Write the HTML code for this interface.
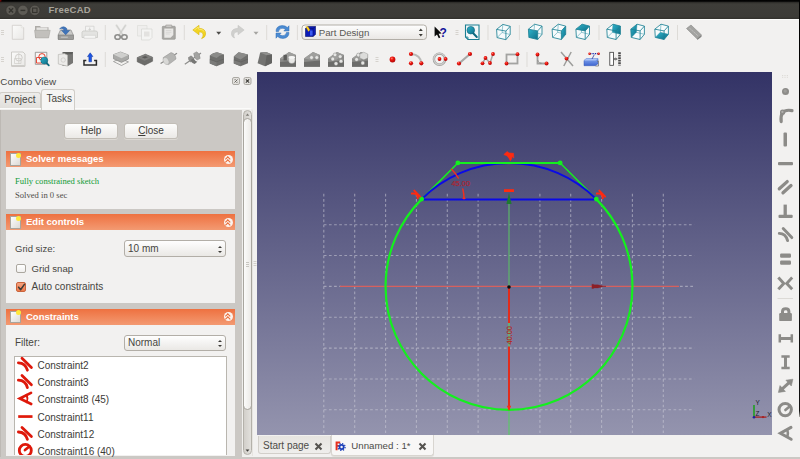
<!DOCTYPE html>
<html><head><meta charset="utf-8"><title>FreeCAD</title>
<style>
html,body{margin:0;padding:0;}
body{width:800px;height:459px;overflow:hidden;background:#f2f1f0;position:relative;font-family:"Liberation Sans","DejaVu Sans",sans-serif;font-size:10px;color:#464541;}
.abs{position:absolute;}
#title{left:0;top:0;width:800px;height:18.5px;background:linear-gradient(#000 0,#050505 1.3px,#2b2a27 2.2px,#3e3d39 4px,#3c3b37 16.5px,#34332f 18.5px);border-bottom:1.5px solid #fcfcfb;}
#title .btn{position:absolute;top:5px;width:10px;height:10px;border-radius:50%;background:#5d5b55;box-shadow:0 0 0 0.5px #33322f;}
#title .t{position:absolute;left:48.5px;top:4px;font-weight:bold;font-size:9.5px;color:#a8a49b;letter-spacing:0.25px;}
.tx{position:absolute;white-space:nowrap;line-height:1;}
.hdr{position:absolute;left:6px;width:229px;height:16px;background:linear-gradient(#ee7140,#f39a72);}
.hdr .ht{position:absolute;left:20px;top:3px;color:#fff;font-weight:bold;font-size:9.5px;line-height:1;white-space:nowrap;}
.body{position:absolute;left:6px;width:229px;background:#f2f1f0;}
.qbtn{position:absolute;height:14px;border:1px solid #c2beb7;border-radius:3px;background:linear-gradient(#fdfdfc,#ebe9e6);box-shadow:0 1px 0 #dcd9d4;text-align:center;line-height:14px;font-size:10px;color:#3c3b37;}

.hdr .ico{position:absolute;left:4px;top:2px;width:10.5px;height:12.5px;background:linear-gradient(135deg,#fdfdfd,#dcdad6);border:0.5px solid #a8a49c;box-sizing:border-box;}
.hdr .ico:after{content:"";position:absolute;right:-1.5px;top:-1.5px;width:5px;height:5px;border-radius:50%;background:#ffe83a;}
.hdr .chev{position:absolute;left:217.5px;top:3.5px;width:9px;height:9px;border-radius:50%;background:#fbf3ee;}
.hdr .chev:before{content:"";position:absolute;left:2.6px;top:2.4px;width:2.6px;height:2.6px;border-left:1.1px solid #e86a36;border-top:1.1px solid #e86a36;transform:rotate(45deg);}
.hdr .chev:after{content:"";position:absolute;left:2.6px;top:5px;width:2.6px;height:2.6px;border-left:1.1px solid #e86a36;border-top:1.1px solid #e86a36;transform:rotate(45deg);}
.combo{position:absolute;width:102px;height:16.5px;box-sizing:border-box;border:1px solid #b2aea7;border-radius:3px;background:linear-gradient(#fefefe,#eae8e5);}
.combo span{position:absolute;left:3.5px;top:2.5px;font-size:10px;line-height:1;white-space:nowrap;}
.combo i{position:absolute;left:93.5px;width:0;height:0;border-left:2px solid transparent;border-right:2px solid transparent;}
.combo i.up{top:4.5px;border-bottom:2.5px solid #3c3b37;}
.combo i.dn{top:9.5px;border-top:2.5px solid #3c3b37;}
.cb{position:absolute;width:9.7px;height:9.5px;box-sizing:border-box;border:1px solid #aba79f;border-radius:2px;background:linear-gradient(#fff,#f1f0ee);}
.cb.on{border-color:#c9643c;background:linear-gradient(#f6a27e,#ee7b4c);}
.li{position:absolute;left:37.5px;font-size:10px;line-height:1;white-space:nowrap;color:#3c3b37;}
</style></head><body>
<div id="title" class="abs">
  <svg class="abs" style="left:0;top:0" width="48" height="19" viewBox="0 0 48 19">
    <g fill="#5d5b55" stroke="#32312d" stroke-width="0.5"><circle cx="11" cy="10.3" r="5.1"/><circle cx="22.9" cy="10.3" r="5.1"/><circle cx="34.8" cy="10.3" r="5.1"/></g>
    <path d="M8.9 8.2 L13.1 12.4 M13.1 8.2 L8.9 12.4" stroke="#35342f" stroke-width="1.4"/><rect x="0" y="0" width="1.4" height="1.6" fill="#6a0808"/>
    <path d="M20.5 10.4 H25.3" stroke="#35342f" stroke-width="1.4"/>
    <rect x="32.6" y="8.1" width="4.4" height="4.4" fill="none" stroke="#35342f" stroke-width="1.1"/>
  </svg>
  <div class="t">FreeCAD</div>
</div>
<div class="abs" style="left:799px;top:0;width:1px;height:417px;background:linear-gradient(#000,#111 98.5%,#b0aeaa);z-index:5;"></div>

<svg id="tbsvg" class="abs" style="left:0;top:19px" width="800" height="53" viewBox="0 19 800 53">
<defs>
<linearGradient id="gpaper" x1="0" y1="0" x2="1" y2="1"><stop offset="0" stop-color="#fbfbfa"/><stop offset="1" stop-color="#e9e8e6"/></linearGradient>
<linearGradient id="gteal" x1="0" y1="0" x2="1" y2="1"><stop offset="0" stop-color="#2fb4cc"/><stop offset="1" stop-color="#0d6f88"/></linearGradient>
<radialGradient id="gred" cx="0.38" cy="0.32" r="0.7"><stop offset="0" stop-color="#ff8a7a"/><stop offset="0.35" stop-color="#f01810"/><stop offset="1" stop-color="#b00808"/></radialGradient>
<linearGradient id="ggray" x1="0" y1="0" x2="0" y2="1"><stop offset="0" stop-color="#9a9a98"/><stop offset="1" stop-color="#6e6e6c"/></linearGradient>
<linearGradient id="gblue" x1="0" y1="0" x2="0" y2="1"><stop offset="0" stop-color="#86a8f0"/><stop offset="1" stop-color="#3f66d0"/></linearGradient>
</defs>
<path d="M1 30.5 h3 M1 32.5 h3 M1 34.5 h3" stroke="#d2cfca" stroke-width="0.9"/>
<path d="M1 57.5 h3 M1 59.5 h3 M1 61.5 h3" stroke="#d2cfca" stroke-width="0.9"/>
<path d="M455.5 30.5 h3 M455.5 32.5 h3 M455.5 34.5 h3" stroke="#d2cfca" stroke-width="0.9"/>
<path d="M375.5 57.5 h3 M375.5 59.5 h3 M375.5 61.5 h3" stroke="#d2cfca" stroke-width="0.9"/>
<line x1="105.3" y1="25" x2="105.3" y2="40" stroke="#dddbd7" stroke-width="1"/>
<line x1="184.3" y1="25" x2="184.3" y2="40" stroke="#dddbd7" stroke-width="1"/>
<line x1="266.7" y1="25" x2="266.7" y2="40" stroke="#dddbd7" stroke-width="1"/>
<line x1="297.4" y1="25" x2="297.4" y2="40" stroke="#dddbd7" stroke-width="1"/>
<line x1="488" y1="25" x2="488" y2="40" stroke="#dddbd7" stroke-width="1"/>
<line x1="519.4" y1="25" x2="519.4" y2="40" stroke="#dddbd7" stroke-width="1"/>
<line x1="599" y1="25" x2="599" y2="40" stroke="#dddbd7" stroke-width="1"/>
<line x1="677.5" y1="25" x2="677.5" y2="40" stroke="#dddbd7" stroke-width="1"/>
<line x1="105.3" y1="52" x2="105.3" y2="67" stroke="#dddbd7" stroke-width="1"/>
<line x1="527" y1="52" x2="527" y2="67" stroke="#dddbd7" stroke-width="1"/>
<path d="M12.3 25.3 h9 l2.4 2.4 v11.6 h-11.4 z" fill="url(#gpaper)" stroke="#cfcdc9" stroke-width="0.8"/><path d="M21.3 25.3 v2.4 h2.4" fill="#fff" stroke="#d8d6d2" stroke-width="0.6"/>
<path d="M35 26 h5 l1 1.2 h7.5 v10.5 h-13.5 z" fill="#adaba7"/><path d="M36.5 27.5 h11 v3 h-11z" fill="#e4e3e1"/><path d="M34.6 30.3 h15.6 l-1.6 7.6 h-13 z" fill="#c2c0bc" stroke="#a9a7a3" stroke-width="0.6"/>
<path d="M60.5 30 h10.5 l2.3 5 v4.3 h-15.2 v-4.3 z" fill="#c9c9c7" stroke="#8e8e8c" stroke-width="0.7"/><rect x="58.3" y="35" width="15" height="4.3" fill="#9c9c9a" stroke="#7e7e7c" stroke-width="0.6"/><path d="M60.8 37.2 h7" stroke="#d8d8d6" stroke-width="0.8"/>
<path d="M59.6 28.8 Q63.5 24.8 66.8 28.6 L66.8 30.4 L69.6 30.4 L65.7 34.8 L61.6 30.4 L64.4 30.4 Q63.5 27.6 59.6 28.8 Z" fill="#3f74ba" stroke="#2b5a9c" stroke-width="0.5"/>
<path d="M85.5 26.2 h8.5 v5.5 h-8.5z" fill="#f3f3f2" stroke="#cfcfcd" stroke-width="0.7"/><path d="M83 31 h13.5 l1 1.2 v5.3 h-15.5 v-5.3 z" fill="#e3e3e1" stroke="#c4c4c2" stroke-width="0.7"/><path d="M84 35.3 h11.6 v3 h-11.6z" fill="#f5f5f4" stroke="#cfcfcd" stroke-width="0.6"/><path d="M89.7 27.5 v2.6 M88.5 29 l1.2 1.3 l1.2 -1.3" stroke="#c9c9c7" stroke-width="0.8" fill="none"/>
<path d="M116.5 25.3 L123.2 35.5 M125.5 25.3 L118.8 35.5" stroke="#dededc" stroke-width="2.2" stroke-linecap="round"/><path d="M116.5 25.3 L123.2 35.5 M125.5 25.3 L118.8 35.5" stroke="#c2c2c0" stroke-width="0.6"/><ellipse cx="117.6" cy="37" rx="2.7" ry="2.3" fill="none" stroke="#8e8e8c" stroke-width="1.6"/><ellipse cx="124.4" cy="37" rx="2.7" ry="2.3" fill="none" stroke="#8e8e8c" stroke-width="1.6"/>
<path d="M137.5 25.5 h9.5 v10.5 h-9.5z" fill="#efeeed" stroke="#dddcda" stroke-width="0.7"/><path d="M141.5 29 h10.5 v8.5 l-2.5 2.5 h-8z" fill="#f4f4f3" stroke="#d6d5d3" stroke-width="0.7"/><rect x="144" y="31.5" width="5.5" height="5" fill="#e3e2e0"/>
<rect x="162.3" y="26.3" width="13" height="13" rx="0.8" fill="#a9a8a5" stroke="#8f8e8b" stroke-width="0.6"/><path d="M164.3 28.5 h9 v6.5 l-2.8 2.8 h-6.2z" fill="#e9e8e6"/><path d="M165.8 25 h6 v2.6 h-6z" fill="#c9c8c5" stroke="#9a9996" stroke-width="0.6"/><path d="M165.8 30.5 h5.5 M165.8 32.3 h5.5 M165.8 34 h4" stroke="#d2d1cf" stroke-width="0.7"/>
<path d="M192.8 30 L199 25.3 L199 28.3 Q205.8 28.6 205.6 34 Q205.4 37.6 201.6 38.6 Q203.6 36.4 203 34 Q202.4 31.8 199 31.8 L199 34.8 Z" fill="#f2d422" stroke="#d9b70e" stroke-width="0.6" stroke-linejoin="round"/><path d="M194.3 30 L198.3 27 L198.3 29 Q203 29.2 204.4 31.6" fill="none" stroke="#fbec7a" stroke-width="0.8"/>
<path d="M216.2 31.8 h5 l-2.5 3 z" fill="#4c4b48"/>
<path d="M244.2 30 L238 25.3 L238 28.3 Q231.2 28.6 231.4 34 Q231.6 37.2 234.6 38 Q233.4 36.2 234 34 Q234.6 31.8 238 31.8 L238 34.8 Z" fill="#cfcfcd" stroke="#c2c2c0" stroke-width="0.5" stroke-linejoin="round"/>
<path d="M253.5 31.8 h5 l-2.5 3 z" fill="#a5a4a1"/>
<g fill="#4b8bd2" stroke="#2f6cb4" stroke-width="0.5" stroke-linejoin="round"><path d="M276 31.5 Q276 26 282 25.6 Q285.5 25.5 287.4 27.5 L289 25.8 L289 31 L283.8 31 L285.4 29.4 Q284 28.2 282 28.3 Q278.8 28.6 278.6 31.5 Z"/><path d="M289 32.5 Q289 38 283 38.4 Q279.5 38.5 277.6 36.5 L276 38.2 L276 33 L281.2 33 L279.6 34.6 Q281 35.8 283 35.7 Q286.2 35.4 286.4 32.5 Z"/></g>
<defs><linearGradient id="gcombo" x1="0" y1="0" x2="0" y2="1"><stop offset="0" stop-color="#fefefe"/><stop offset="1" stop-color="#e9e7e4"/></linearGradient></defs>
<rect x="302" y="25" width="124.5" height="14.5" rx="3" fill="url(#gcombo)" stroke="#b2aea7" stroke-width="1"/>
<path d="M305.5 28.5 l2.5 -2 h7.5 v8 l-2.5 2 h-7.5z" fill="#0a1ab8" stroke="#06106a" stroke-width="0.6"/><path d="M305.5 28.5 h7.5 l2.5 -2 M313 28.5 v8" fill="none" stroke="#06106a" stroke-width="0.6"/><path d="M305.7 26.8 l2.3 -0.2 l2 3.4 l-1.6 1.6 z" fill="#ffd21a" stroke="#b08a00" stroke-width="0.3"/><rect x="310" y="30.5" width="2.6" height="5" fill="#3a5af0"/>
<text x="318.7" y="36" font-family="Liberation Sans,sans-serif" font-size="9.7" fill="#5a5854">Part Design</text>
<path d="M418.8 31 l2 -2.5 l2 2.5z M418.8 34 l2 2.5 l2 -2.5z" fill="#3c3b37"/>
<path d="M434.6 26.6 L434.6 36.4 L437 34.4 L438.8 38.2 L440.3 37.5 L438.6 33.8 L441.6 33.6 Z" fill="#0a0a0a"/><text x="439.6" y="37" font-family="Liberation Sans,sans-serif" font-weight="bold" font-size="12" fill="#14149a">?</text>
<path d="M465.5 25 h13.5 v14.5 h-11 l-2.5 -2.5 z" fill="#f4f8f9" stroke="#1b7f92" stroke-width="1.1"/><path d="M465.5 37 h2.5 v2.5" fill="none" stroke="#1b7f92" stroke-width="0.8"/><line x1="472.5" y1="32.5" x2="476.8" y2="37" stroke="#0f6b80" stroke-width="2" stroke-linecap="round"/><circle cx="470.8" cy="30.2" r="3.8" fill="url(#gteal)" stroke="#0c6278" stroke-width="0.6"/>
<path d="M496.6 29.4 L502.8 24.4 L510.2 26.3 L510.2 34.5 L505.9 39.7 L497.1 37.6 Z" fill="#f7fbfc"/><path d="M502.8 24.4 L502.1 32.5 M502.1 32.5 L497.1 37.6 M502.1 32.5 L510.2 34.5" fill="none" stroke="#2a8fa2" stroke-width="0.6" opacity="0.8"/><path d="M496.6 29.4 L502.8 24.4 L510.2 26.3 L510.2 34.5 L505.9 39.7 L497.1 37.6 Z M496.6 29.4 L505.9 31.1 M505.9 31.1 L510.2 26.3 M505.9 31.1 L505.9 39.7" fill="none" stroke="#1f8295" stroke-width="0.85" stroke-linejoin="round"/>
<path d="M528.4 29.2 L534.6 24.2 L542.0 26.1 L542.0 34.3 L537.7 39.5 L528.9 37.4 Z" fill="#f7fbfc"/><path d="M528.4 29.2 L537.7 30.9 L537.7 39.5 L528.9 37.4 Z" fill="url(#gteal)"/><path d="M534.6 24.2 L533.9 32.3 M533.9 32.3 L528.9 37.4 M533.9 32.3 L542.0 34.3" fill="none" stroke="#2a8fa2" stroke-width="0.6" opacity="0.8"/><path d="M528.4 29.2 L534.6 24.2 L542.0 26.1 L542.0 34.3 L537.7 39.5 L528.9 37.4 Z M528.4 29.2 L537.7 30.9 M537.7 30.9 L542.0 26.1 M537.7 30.9 L537.7 39.5" fill="none" stroke="#1f8295" stroke-width="0.85" stroke-linejoin="round"/>
<path d="M552.1 29.2 L558.3 24.2 L565.7 26.1 L565.7 34.3 L561.4 39.5 L552.6 37.4 Z" fill="#f7fbfc"/><path d="M561.4 30.9 L565.7 26.1 L565.7 34.3 L561.4 39.5 Z" fill="url(#gteal)"/><path d="M558.3 24.2 L557.6 32.3 M557.6 32.3 L552.6 37.4 M557.6 32.3 L565.7 34.3" fill="none" stroke="#2a8fa2" stroke-width="0.6" opacity="0.8"/><path d="M552.1 29.2 L558.3 24.2 L565.7 26.1 L565.7 34.3 L561.4 39.5 L552.6 37.4 Z M552.1 29.2 L561.4 30.9 M561.4 30.9 L565.7 26.1 M561.4 30.9 L561.4 39.5" fill="none" stroke="#1f8295" stroke-width="0.85" stroke-linejoin="round"/>
<path d="M575.9 29.2 L582.1 24.2 L589.5 26.1 L589.5 34.3 L585.2 39.5 L576.4 37.4 Z" fill="#f7fbfc"/><path d="M575.9 29.2 L582.1 24.2 L589.5 26.1 L585.2 30.9 Z" fill="url(#gteal)"/><path d="M582.1 24.2 L581.4 32.3 M581.4 32.3 L576.4 37.4 M581.4 32.3 L589.5 34.3" fill="none" stroke="#2a8fa2" stroke-width="0.6" opacity="0.8"/><path d="M575.9 29.2 L582.1 24.2 L589.5 26.1 L589.5 34.3 L585.2 39.5 L576.4 37.4 Z M575.9 29.2 L585.2 30.9 M585.2 30.9 L589.5 26.1 M585.2 30.9 L585.2 39.5" fill="none" stroke="#1f8295" stroke-width="0.85" stroke-linejoin="round"/>
<path d="M606.8 29.2 L613.0 24.2 L620.4 26.1 L620.4 34.3 L616.1 39.5 L607.3 37.4 Z" fill="#f7fbfc"/><path d="M613.0 24.2 L620.4 26.1 L620.4 34.3 L612.3 32.3 Z" fill="url(#gteal)"/><path d="M613.0 24.2 L612.3 32.3 M612.3 32.3 L607.3 37.4 M612.3 32.3 L620.4 34.3" fill="none" stroke="#2a8fa2" stroke-width="0.6" opacity="0.8"/><path d="M606.8 29.2 L613.0 24.2 L620.4 26.1 L620.4 34.3 L616.1 39.5 L607.3 37.4 Z M606.8 29.2 L616.1 30.9 M616.1 30.9 L620.4 26.1 M616.1 30.9 L616.1 39.5" fill="none" stroke="#1f8295" stroke-width="0.85" stroke-linejoin="round"/>
<path d="M630.8 29.2 L637.0 24.2 L644.4 26.1 L644.4 34.3 L640.1 39.5 L631.3 37.4 Z" fill="#f7fbfc"/><path d="M630.8 29.2 L637.0 24.2 L636.3 32.3 L631.3 37.4 Z" fill="url(#gteal)"/><path d="M637.0 24.2 L636.3 32.3 M636.3 32.3 L631.3 37.4 M636.3 32.3 L644.4 34.3" fill="none" stroke="#2a8fa2" stroke-width="0.6" opacity="0.8"/><path d="M630.8 29.2 L637.0 24.2 L644.4 26.1 L644.4 34.3 L640.1 39.5 L631.3 37.4 Z M630.8 29.2 L640.1 30.9 M640.1 30.9 L644.4 26.1 M640.1 30.9 L640.1 39.5" fill="none" stroke="#1f8295" stroke-width="0.85" stroke-linejoin="round"/>
<path d="M654.8 29.2 L661.0 24.2 L668.4 26.1 L668.4 34.3 L664.1 39.5 L655.3 37.4 Z" fill="#f7fbfc"/><path d="M655.3 37.4 L664.1 39.5 L668.4 34.3 L660.3 32.3 Z" fill="url(#gteal)"/><path d="M661.0 24.2 L660.3 32.3 M660.3 32.3 L655.3 37.4 M660.3 32.3 L668.4 34.3" fill="none" stroke="#2a8fa2" stroke-width="0.6" opacity="0.8"/><path d="M654.8 29.2 L661.0 24.2 L668.4 26.1 L668.4 34.3 L664.1 39.5 L655.3 37.4 Z M654.8 29.2 L664.1 30.9 M664.1 30.9 L668.4 26.1 M664.1 30.9 L664.1 39.5" fill="none" stroke="#1f8295" stroke-width="0.85" stroke-linejoin="round"/>
<path d="M686.5 28.5 L691 25 L701.5 35 L697 38.8 Z" fill="#a3a3a1" stroke="#8a8a88" stroke-width="0.6"/><path d="M697 38.8 L701.5 35 L701.5 36.8 L697.3 40 Z" fill="#7f7f7d"/><path d="M689.5 28 l1.6 1.7 M691.7 30 l1.6 1.7 M693.9 32 l1.6 1.7 M696.1 34 l1.6 1.7" stroke="#c9c9c7" stroke-width="0.7"/>
<path d="M11.5 52 h11.5 l2 2 v12.3 h-13.5 z" fill="url(#gpaper)" stroke="#c3c1bd" stroke-width="0.8"/><path d="M12 65.2 h12.5 v1.4 h-12.5z" fill="#c9c7c3"/><circle cx="18.8" cy="57.6" r="3.4" fill="none" stroke="#c6c4c0" stroke-width="0.8"/><path d="M14.5 58.5 h6.5 v5 h-6.5z M18.8 53 v11" fill="none" stroke="#cfcdc9" stroke-width="0.7"/>
<path d="M35.3 52.3 h11.5 v12 h-11.5z" fill="#f8f6f5" stroke="#8a8885" stroke-width="0.8"/><circle cx="42" cy="56.8" r="3.2" fill="none" stroke="#e83a28" stroke-width="1"/><path d="M36.5 57.5 h5 v5.5 h-5z" fill="none" stroke="#e83a28" stroke-width="0.9"/><line x1="46" y1="62.3" x2="48.8" y2="65.3" stroke="#0f6b80" stroke-width="1.8" stroke-linecap="round"/><circle cx="44.3" cy="60.5" r="3.5" fill="url(#gteal)" stroke="#0c6278" stroke-width="0.5"/>
<path d="M62.5 52 h10.5 v11 l-5 3 h-5.5z" fill="#767674"/><path d="M62.5 52 h10.5 l-1 2.2 h-6z" fill="#5e5e5c"/><path d="M58.3 54.5 l6.2 -0.8 l3 1.5 v11 l-9.2 -2.2z" fill="#ecebe9" stroke="#b9b7b3" stroke-width="0.7"/><circle cx="63.2" cy="60" r="2.2" fill="none" stroke="#c9c7c3" stroke-width="0.7"/>
<path d="M84 60.4 v4.6 h12.4 v-4.6" fill="none" stroke="#2b2b2b" stroke-width="1.5" stroke-linejoin="miter"/><path d="M83.3 60.4 h3 M94.1 60.4 h3" stroke="#2b2b2b" stroke-width="1.5"/><path d="M90.2 52.8 L92.9 56.6 L91.5 56.6 L91.5 61.8 L88.9 61.8 L88.9 56.6 L87.5 56.6 Z" fill="#1b55e6" stroke="#0a2f9a" stroke-width="0.5"/>
<path d="M113.5 61.5 l7 -2.8 l8 3.2 l-7 3.6z" fill="#f1f0ee" stroke="#8b8b89" stroke-width="0.7"/><path d="M113.5 54.6 l7 -2.6 l8 3 v4 l-7 3.4 l-8 -3.6z" fill="#a9a9a7" stroke="#80807e" stroke-width="0.6"/><path d="M113.5 54.6 l7 -2.6 l8 3 l-7 3.2z" fill="#cfcfcd"/>
<path d="M137.2 57.6 l8.2 -3.4 l7.2 3 v4 l-8 4 l-7.4 -3.4z" fill="#6c6c6a" stroke="#555553" stroke-width="0.5"/><path d="M137.2 57.6 l8.2 -3.4 l7.2 3 l-8 3.6z" fill="#7f7f7d"/><path d="M141.8 57.3 l3.4 -1.3 l2.8 1.2 l-3.2 1.4z" fill="#5a5a58"/>
<line x1="160.6" y1="63.6" x2="177" y2="53.2" stroke="#8c8c8a" stroke-width="1.2"/><path d="M163.2 57.6 L171 52.6 Q175.6 53.6 176 59 L168.6 64.6 Q163.4 63.8 163.2 57.6Z" fill="#b4b4b2" stroke="#8f8f8d" stroke-width="0.5"/><ellipse cx="166" cy="61" rx="2.6" ry="3.7" transform="rotate(-28 166 61)" fill="#d8d8d6" stroke="#a5a5a3" stroke-width="0.4"/>
<line x1="184.8" y1="64.3" x2="201" y2="53" stroke="#8c8c8a" stroke-width="1.2"/><path d="M188 57.5 l3 -2 q2.6 1 3 5 l-3 2 q-2.6 -1 -3 -5z" fill="#8e8e8c"/><path d="M193.6 53.4 l3 -1.6 q3.4 1.6 3.6 6.6 l-3 1.6 q-3 -1.4 -3.6 -6.6z" fill="#a3a3a1" stroke="#80807e" stroke-width="0.4"/><path d="M190.5 60 l3 -1.6 q1.6 2.4 3.8 3.4 l-2.6 2.2 q-3 -1 -4.2 -4z" fill="#777775"/>
<path d="M209.8 55.5 Q213 52.4 217 52.2 L224 54.6 V63.2 L216.6 66.2 L209.8 63.4Z" fill="#6f6f6d"/><path d="M209.8 55.5 Q213 52.4 217 52.2 L224 54.6 Q219.6 55 216.6 58Z" fill="#8b8b89"/><path d="M209.8 59.6 l6.8 2.4 v4.2 l-6.8 -2.8z" fill="#7b7b79"/><path d="M209.8 59.4 l6.8 2.4 l7.4 -2.9" fill="none" stroke="#5b5b59" stroke-width="0.5"/>
<path d="M233.8 56.5 L238.6 52.2 L248 54.6 V63.2 L240.6 66.2 L233.8 63.4Z" fill="#6f6f6d"/><path d="M233.8 56.5 L238.6 52.2 L248 54.6 L240.6 59.4Z" fill="#8b8b89"/><path d="M233.8 60 l6.8 2.2 v4 l-6.8 -2.8z" fill="#7b7b79"/><path d="M233.8 59.8 l6.8 2.2 l7.4 -2.9" fill="none" stroke="#5b5b59" stroke-width="0.5"/>
<path d="M260.2 52.6 L266.2 52 L272 54.4 V63 L265 66.2 L257.6 63.2Z" fill="#737371"/><path d="M260.2 52.6 L266.2 52 L272 54.4 L266.6 55.2Z" fill="#8f8f8d"/><path d="M266.6 55.2 L272 54.4 V63 L265 66.2Z" fill="#626260"/>
<path d="M280 58.5 L289 52 L296 55 V66.8 H280Z" fill="#8a8a88"/><path d="M280 62 L296 60.5 V66.8 H280Z" fill="#6c6c6a"/><path d="M280 58.5 L289 52 L296 55 L288 60Z" fill="#9f9f9d"/><path d="M283.5 54.8 h3.4 v5.6 h-3.4z" fill="#5d5d5b"/><ellipse cx="291.8" cy="60" rx="3.3" ry="3.6" fill="#e9e9e7" stroke="#8d8d8b" stroke-width="0.4"/><ellipse cx="291.8" cy="57.4" rx="3.3" ry="1.4" fill="#f6f6f5"/>
<path d="M304 58.5 L313 52 L320 55 V66.8 H304Z" fill="#8a8a88"/><path d="M304 62 L320 60.5 V66.8 H304Z" fill="#6c6c6a"/><path d="M304 58.5 L313 52 L320 55 L312 60Z" fill="#9f9f9d"/><circle cx="311.5" cy="57.5" r="1.9" fill="#e6e6e4" stroke="#777775" stroke-width="0.4"/><circle cx="316.8" cy="57.5" r="1.9" fill="#e6e6e4" stroke="#777775" stroke-width="0.4"/>
<path d="M328 58.5 L337 52 L344 55 V66.8 H328Z" fill="#8a8a88"/><path d="M328 62 L344 60.5 V66.8 H328Z" fill="#6c6c6a"/><path d="M328 58.5 L337 52 L344 55 L336 60Z" fill="#9f9f9d"/><circle cx="335" cy="54.8" r="1.9" fill="#e6e6e4" stroke="#777775" stroke-width="0.4"/><circle cx="340.2" cy="56.6" r="1.9" fill="#e6e6e4" stroke="#777775" stroke-width="0.4"/><circle cx="332.8" cy="59" r="1.9" fill="#e6e6e4" stroke="#777775" stroke-width="0.4"/><circle cx="341" cy="61.2" r="1.9" fill="#e6e6e4" stroke="#777775" stroke-width="0.4"/><circle cx="336" cy="63.6" r="1.9" fill="#e6e6e4" stroke="#777775" stroke-width="0.4"/>
<path d="M352 58.5 L361 52 L368 55 V66.8 H352Z" fill="#8a8a88"/><path d="M352 62 L368 60.5 V66.8 H352Z" fill="#6c6c6a"/><path d="M352 58.5 L361 52 L368 55 L360 60Z" fill="#9f9f9d"/><circle cx="358.4" cy="55" r="1.9" fill="#e6e6e4" stroke="#777775" stroke-width="0.4"/><circle cx="356.6" cy="59.4" r="1.9" fill="#e6e6e4" stroke="#777775" stroke-width="0.4"/><circle cx="362.8" cy="63" r="1.9" fill="#e6e6e4" stroke="#777775" stroke-width="0.4"/><path d="M359.8 54 l4 -1.8 l4 1.8 v4 l-4 1.8 l-4 -1.8z" fill="#dcdcda" stroke="#8d8d8b" stroke-width="0.4"/>
<circle cx="392.5" cy="59.5" r="2.9" fill="url(#gred)"/>
<path d="M411.5 54 Q420.5 55 421.3 63" fill="none" stroke="#b9b9b7" stroke-width="2" stroke-linecap="round"/><circle cx="411" cy="54" r="2.1" fill="url(#gred)"/><circle cx="411" cy="63.3" r="2.1" fill="url(#gred)"/><circle cx="421.3" cy="63.3" r="2.1" fill="url(#gred)"/>
<circle cx="439.5" cy="59.2" r="5.6" fill="none" stroke="#9d9d9b" stroke-width="2.4"/><circle cx="439.5" cy="59" r="5.6" fill="none" stroke="#cdcdcb" stroke-width="1.4"/><circle cx="439.5" cy="59" r="1.9" fill="url(#gred)"/><circle cx="445.6" cy="59" r="1.9" fill="url(#gred)"/>
<line x1="459" y1="63.5" x2="470" y2="54" stroke="#a9a9a7" stroke-width="2.2" stroke-linecap="round"/><circle cx="459" cy="63.5" r="2.1" fill="url(#gred)"/><circle cx="470" cy="54" r="2.1" fill="url(#gred)"/>
<path d="M482.5 63.3 L485.5 58 L490 63 L493 54" fill="none" stroke="#a9a9a7" stroke-width="1.6"/><circle cx="482.5" cy="63.3" r="1.9" fill="url(#gred)"/><circle cx="485.5" cy="58" r="1.9" fill="url(#gred)"/><circle cx="490" cy="63" r="1.9" fill="url(#gred)"/><circle cx="493" cy="54" r="1.9" fill="url(#gred)"/>
<rect x="506.5" y="54.5" width="11" height="9" fill="none" stroke="#a3a3a1" stroke-width="1.8"/><circle cx="517.5" cy="54.2" r="1.9" fill="url(#gred)"/><circle cx="506.5" cy="63.5" r="1.9" fill="url(#gred)"/>
<path d="M537.5 54.5 V63.5 H548.5" fill="none" stroke="#a3a3a1" stroke-width="1.8"/><path d="M538 60.5 Q538.5 63 541.5 63.2" fill="none" stroke="#6d6d6b" stroke-width="0.9" stroke-dasharray="1 0.8"/><circle cx="537.5" cy="54.5" r="1.9" fill="url(#gred)"/><circle cx="546.5" cy="63.5" r="1.9" fill="url(#gred)"/>
<path d="M561 52 L573 66 M571.2 52 L563.8 66" stroke="#9d9d9b" stroke-width="1.5" fill="none"/><circle cx="566.5" cy="58.6" r="1.9" fill="url(#gred)"/>
<path d="M584 60.5 l2.5 -2 h11.5 v5.2 l-2.5 2 h-11.5z" fill="url(#gblue)" stroke="#3558b8" stroke-width="0.5"/><path d="M584 60.5 l2.5 -2 h11.5 l-2.5 2z" fill="#a9c2f6"/><path d="M597 61.5 l1.5 -0.5 v5 h-3" fill="none" stroke="#77777a" stroke-width="0.8"/><path d="M590 53.7 H598" stroke="#1a2fb0" stroke-width="1.3" stroke-dasharray="1.4 1"/><path d="M592 59 L594.3 54.6" stroke="#2a3a9a" stroke-width="0.8"/><circle cx="589.6" cy="53.7" r="1.3" fill="url(#gred)"/><circle cx="598.6" cy="53.7" r="1.3" fill="url(#gred)"/>
<rect x="609.8" y="52.3" width="3.8" height="13" fill="#fff" stroke="#3a3a3a" stroke-width="0.8"/><path d="M619.5 52.3 V65.5" stroke="#4a4a4a" stroke-width="2.6" stroke-dasharray="1.6 0.9"/><path d="M613.6 59 H617.5" stroke="#555" stroke-width="0.8"/><circle cx="615.5" cy="59" r="1.1" fill="#888" stroke="#444" stroke-width="0.4"/>
</svg>
<svg id="rtsvg" class="abs" style="left:772px;top:72px" width="28" height="387" viewBox="772 72 28 387">
<path d="M782 75.5 h1.2 M784.4 75.5 h1.2 M786.8 75.5 h1.2 M782 77.3 h1.2 M784.4 77.3 h1.2 M786.8 77.3 h1.2" stroke="#dad8d4" stroke-width="0.9"/>
<circle cx="785.5" cy="91.5" r="3.5" fill="#8c8b88"/><circle cx="785.2" cy="91" r="1.7" fill="#9e9d9a"/>
<path d="M781.2 121.6 Q780.4 116 782.6 112.6 Q785.4 109.4 792 110.6" fill="none" stroke="#8c8b88" stroke-width="3.2" stroke-linecap="round"/><circle cx="782.6" cy="112.2" r="2.6" fill="#8c8b88"/><circle cx="782.4" cy="111.9" r="1.1" fill="#b2b1ae"/>
<rect x="783.5" y="132.4" width="3.5" height="14" rx="1" fill="#8c8b88"/>
<rect x="778" y="162" width="15" height="3.3" rx="1" fill="#8c8b88"/>
<path d="M779.3 188.8 L787.2 181.6 M783 192.8 L791 185.5" stroke="#8c8b88" stroke-width="3.3" stroke-linecap="round"/>
<path d="M785.2 204.6 V215" stroke="#8c8b88" stroke-width="3.3"/><rect x="778.5" y="214.7" width="14.2" height="3.3" rx="1" fill="#8c8b88"/>
<path d="M783.2 228.6 L791.8 237.6" stroke="#8c8b88" stroke-width="2.9" stroke-linecap="round"/><path d="M779.3 233.4 Q785.6 233.4 787.6 240.6" fill="none" stroke="#8c8b88" stroke-width="2.9" stroke-linecap="round"/>
<rect x="780.1" y="253.5" width="10.9" height="4.3" rx="1.2" fill="#8c8b88"/><rect x="780.1" y="260.5" width="10.9" height="4.3" rx="1.2" fill="#8c8b88"/>
<path d="M779.3 278.6 L783.8 283.4 L779.3 288.2 M791.2 278.6 L786.7 283.4 L791.2 288.2" fill="none" stroke="#8c8b88" stroke-width="2.9" stroke-linecap="square" stroke-linejoin="miter"/>
<line x1="777.5" y1="298.5" x2="793" y2="298.5" stroke="#dcdad6" stroke-width="1"/>
<path d="M782.5 314 V311.6 Q782.5 308.7 785.7 308.7 Q788.9 308.7 788.9 311.6 V314" fill="none" stroke="#8c8b88" stroke-width="3"/><rect x="779.2" y="313.1" width="12.7" height="8" rx="1.2" fill="#8c8b88"/>
<path d="M779.8 334.3 V342.5 M791.8 334.3 V342.5" stroke="#8c8b88" stroke-width="2.5" fill="none"/><path d="M779.8 338.5 H791.8" stroke="#8c8b88" stroke-width="3"/>
<path d="M781.4 356.4 H789.7 M781.4 368.1 H789.7" stroke="#8c8b88" stroke-width="2.5" fill="none"/><path d="M785.5 356.4 V368.1" stroke="#8c8b88" stroke-width="3"/>
<path d="M782 389.2 L789.4 382.4" stroke="#8c8b88" stroke-width="3"/><path d="M778.4 392.4 L780 385.6 L785.4 391.4 Z M792.9 379.2 L791.3 386 L785.9 380.2 Z" fill="#8c8b88" stroke="#8c8b88" stroke-width="0.6" stroke-linejoin="round"/>
<circle cx="785.2" cy="409.6" r="6.2" fill="none" stroke="#8c8b88" stroke-width="3"/><path d="M785.4 410 L790.2 406" stroke="#8c8b88" stroke-width="2.6" stroke-linecap="round"/>
<path d="M791 427.4 L780.4 433.2 L791.2 439.2" fill="none" stroke="#8c8b88" stroke-width="3" stroke-linecap="round" stroke-linejoin="miter"/><path d="M787.2 429.6 Q788.6 433.2 787.4 436.8" fill="none" stroke="#8c8b88" stroke-width="2.6"/>
<defs><linearGradient id="redge" x1="0" y1="0" x2="0" y2="1"><stop offset="0" stop-color="#0a0a0a"/><stop offset="0.985" stop-color="#1a1a1a"/><stop offset="1" stop-color="#b0aeaa"/></linearGradient></defs>
</svg>
<!-- LEFT PANEL -->
<div id="left" class="abs" style="left:0;top:0;width:257px;height:459px;">
  <div class="tx" style="left:0.3px;top:76.8px;font-size:9.9px;color:#4a4945;">Combo View</div>
  <!-- dock buttons -->
  <svg class="abs" style="left:231px;top:76px" width="22" height="10" viewBox="0 0 22 10">
    <rect x="1.5" y="1.5" width="7" height="7" rx="1.5" fill="#e4e2de" stroke="#9a9892" stroke-width="0.8"/>
    <path d="M3.5 6.5 L6.5 3.5 M3.5 3.8 L4.5 3.5 M5.5 6.5 L6.5 6.2" stroke="#55534e" stroke-width="0.9" fill="none"/>
    <rect x="13" y="1.5" width="7" height="7" rx="1.5" fill="#e4e2de" stroke="#9a9892" stroke-width="0.8"/>
    <path d="M14.8 3.3 L18.2 6.7 M18.2 3.3 L14.8 6.7" stroke="#3c3b37" stroke-width="1.1" fill="none"/>
  </svg>
  <!-- tabs -->
  <div class="abs" style="left:0;top:108px;width:253px;height:348px;border-top:1px solid #fbfbfa;border-right:1px solid #e6e4e0;box-sizing:border-box;border-top-right-radius:4px;background:#f0efed;"></div>
  <div class="abs" style="left:-1px;top:91.5px;width:42px;height:16.5px;box-sizing:border-box;border:1px solid #cfccc6;border-bottom:none;border-radius:3px 3px 0 0;background:linear-gradient(#eeedeb,#e1dfdb);"></div>
  <div class="tx" style="left:4.3px;top:94.6px;">Project</div>
  <div class="abs" style="left:41.4px;top:89px;width:34px;height:20.5px;box-sizing:border-box;border:1px solid #d0cdc8;border-bottom:none;border-radius:3px 3px 0 0;background:#f6f5f4;"></div>
  <div class="tx" style="left:46.5px;top:93.7px;">Tasks</div>
  <!-- inner scroll viewport -->
  <div class="abs" style="left:0;top:109.5px;width:241.5px;height:347px;background:#cbc8c4;border-left:1px solid #bdb9b4;box-sizing:border-box;"></div>
  <!-- buttons -->
  <div class="qbtn" style="left:64px;top:123px;width:52px;">Help</div>
  <div class="qbtn" style="left:124px;top:123px;width:52px;"><u>C</u>lose</div>

  <!-- Solver messages -->
  <div class="hdr" style="top:151px"><span class="ico"></span><span class="ht">Solver messages</span><span class="chev"></span></div>
  <div class="body" style="top:167px;height:41.5px;"></div>
  <div class="tx" style="left:15px;top:176.5px;font-family:'Liberation Serif','DejaVu Serif',serif;font-size:8.6px;color:#0f9a36;">Fully constrained sketch</div>
  <div class="tx" style="left:15px;top:190.5px;font-family:'Liberation Serif','DejaVu Serif',serif;font-size:8.6px;color:#504e4a;">Solved in 0 sec</div>

  <!-- Edit controls -->
  <div class="hdr" style="top:214px"><span class="ico"></span><span class="ht">Edit controls</span><span class="chev"></span></div>
  <div class="body" style="top:230px;height:73px;"></div>
  <div class="tx" style="left:15px;top:243.8px;font-size:9.5px;">Grid size:</div>
  <div class="combo" style="left:123.5px;top:240px;"><span>10 mm</span><i class="up"></i><i class="dn"></i></div>
  <div class="cb" style="left:16.2px;top:263.5px;"></div>
  <div class="tx" style="left:31.5px;top:263.8px;font-size:9.6px;">Grid snap</div>
  <div class="cb on" style="left:16.2px;top:282.2px;"><svg width="9" height="9" viewBox="0 0 9 9" style="position:absolute;left:0px;top:-0.3px"><path d="M1.6 4.2 L3.6 6.8 L7.4 1.4" fill="none" stroke="#3c3b37" stroke-width="1.5" stroke-linecap="round" stroke-linejoin="round"/></svg></div>
  <div class="tx" style="left:31.5px;top:282px;">Auto constraints</div>

  <!-- Constraints -->
  <div class="hdr" style="top:308.5px"><span class="ico"></span><span class="ht">Constraints</span><span class="chev"></span></div>
  <div class="body" style="top:324.5px;height:131.5px;"></div>
  <div class="tx" style="left:15px;top:337.5px;">Filter:</div>
  <div class="combo" style="left:123.5px;top:334.5px;"><span>Normal</span><i class="up"></i><i class="dn"></i></div>
  <div class="abs" style="left:14px;top:355.5px;width:213px;height:99.5px;box-sizing:border-box;border:1px solid #b9b6af;border-bottom:none;background:#fff;"></div>
  <div class="li" style="top:360.9px;">Constraint2</div>
  <div class="li" style="top:378.2px;">Constraint3</div>
  <div class="li" style="top:395.4px;">Constraint8 (45)</div>
  <div class="li" style="top:412.7px;">Constraint11</div>
  <div class="li" style="top:430.1px;">Constraint12</div>
  <div class="li" style="top:447.4px;">Constraint16 (40)</div>

  <svg class="abs" style="left:0;top:356px" width="40" height="99" viewBox="0 356 40 99"><g transform="translate(0 365)" fill="none" stroke="#de180a" stroke-width="2.8" stroke-linecap="round"><path d="M22 -6.8 L31.4 2.4"/><path d="M18.4 -2.2 Q25.6 -2 27.4 5.2"/></g><g transform="translate(0 382.4)" fill="none" stroke="#de180a" stroke-width="2.8" stroke-linecap="round"><path d="M22 -6.8 L31.4 2.4"/><path d="M18.4 -2.2 Q25.6 -2 27.4 5.2"/></g><g transform="translate(0 434.2)" fill="none" stroke="#de180a" stroke-width="2.8" stroke-linecap="round"><path d="M22 -6.8 L31.4 2.4"/><path d="M18.4 -2.2 Q25.6 -2 27.4 5.2"/></g><g fill="none" stroke="#de180a" stroke-width="2.7" stroke-linecap="round" stroke-linejoin="miter"><path d="M31 392.9 L19.8 398.5 L31.2 404"/><path d="M26.5 394.8 Q28.3 398.5 26.8 402.2" stroke-width="2"/></g><rect x="18.2" y="415.2" width="14.3" height="2.7" fill="#e01a0a"/><g fill="none" stroke="#de180a" stroke-width="2.8" stroke-linecap="round"><circle cx="25.3" cy="450.4" r="6"/><path d="M25 450 L29.3 446.5"/></g></svg>
  <!-- scrollbar -->
  <div class="abs" style="left:243px;top:110px;width:9px;height:345px;box-sizing:border-box;border:1px solid #b4b1aa;border-radius:4.5px;background:linear-gradient(90deg,#d2cfca,#e2e0dc);"></div>
  <div class="abs" style="left:243px;top:118px;width:9px;height:292px;box-sizing:border-box;border:1px solid #a9a69f;border-radius:4.5px;background:linear-gradient(90deg,#fbfbfa,#eceae7);"></div>
  <svg class="abs" style="left:243px;top:110px" width="9" height="346" viewBox="0 0 9 346">
    <path d="M2.8 5.8 L4.5 3.6 L6.2 5.8 Z" fill="#7d7b75"/>
    <path d="M2.6 339.4 L4.5 341.8 L6.4 339.4 Z" fill="#3c3b37"/>
    <path d="M3 152.5 h3 M3 154.5 h3 M3 156.5 h3" stroke="#bdbab4" stroke-width="0.8"/>
  </svg>
  <svg class="abs" style="left:253px;top:258px" width="4" height="12" viewBox="0 0 4 12"><path d="M0.5 3.5 h3 M0.5 5.5 h3 M0.5 7.5 h3" stroke="#c9c6c0" stroke-width="0.8"/></svg>
  <!-- bottom strip -->
  <div class="abs" style="left:0;top:456.5px;width:800px;height:2.5px;background:#cbc8c4;"></div>
</div>

<!-- TABBAR -->
<div id="tabs" class="abs" style="left:257px;top:435px;width:515px;height:21px;">
  <div class="abs" style="left:0.5px;top:1px;width:73px;height:18px;box-sizing:border-box;border:1px solid #d2cfca;border-top:none;border-radius:0 0 3px 3px;background:linear-gradient(#e6e4e0,#efeeec);"></div>
  <div class="tx" style="left:6px;top:6px;font-size:10px;color:#4c4b47;">Start page</div>
  <svg class="abs" style="left:56.5px;top:6.5px" width="9" height="9" viewBox="0 0 9 9"><path d="M1.5 1.5 L7.5 7.5 M7.5 1.5 L1.5 7.5" stroke="#55534f" stroke-width="2.1"/></svg>
  <div class="abs" style="left:73.5px;top:0;width:103px;height:20.5px;box-sizing:border-box;border:1px solid #d8d5d0;border-top:none;border-radius:0 0 3px 3px;background:#f8f7f6;box-shadow:0 1px 0 #e2e0dc;"></div>
  <svg class="abs" style="left:78px;top:5.5px" width="11" height="11" viewBox="0 0 11 11"><path d="M0.6 0.6 h4.6 v1.8 h-2.6 v1.6 h2 v1.6 h-2 v3.6 h-2z" fill="#e8301e"/><circle cx="6.6" cy="6" r="2.9" fill="#1c3fb8"/><circle cx="6.6" cy="6" r="3.5" fill="none" stroke="#1c3fb8" stroke-width="1.2" stroke-dasharray="1.3 1.45"/><circle cx="6.6" cy="6" r="1.2" fill="#f4f4f8"/></svg>
  <div class="tx" style="left:94.3px;top:6px;font-size:9.7px;color:#4c4b47;">Unnamed : 1*</div>
  <svg class="abs" style="left:160.5px;top:6.5px" width="9" height="9" viewBox="0 0 9 9"><path d="M1.5 1.5 L7.5 7.5 M7.5 1.5 L1.5 7.5" stroke="#55534f" stroke-width="2.1"/></svg>
</div>
<!-- VIEWPORT -->
<svg class="abs" style="left:257px;top:72px" width="515" height="363" viewBox="257 72 515 363">
<defs><linearGradient id="bg" x1="0" y1="0" x2="0" y2="1"><stop offset="0" stop-color="#333366"/><stop offset="1" stop-color="#9494ae"/></linearGradient></defs>
<rect x="257" y="72" width="515" height="363" fill="url(#bg)"/>
<g stroke="#cfcfda" stroke-width="1.1" stroke-dasharray="2.7 2.443" opacity="0.55" fill="none">
<line x1="323.8" y1="193.8" x2="323.8" y2="435"/>
<line x1="354.7" y1="193.8" x2="354.7" y2="435"/>
<line x1="385.6" y1="193.8" x2="385.6" y2="435"/>
<line x1="416.4" y1="193.8" x2="416.4" y2="435"/>
<line x1="447.3" y1="193.8" x2="447.3" y2="435"/>
<line x1="478.1" y1="193.8" x2="478.1" y2="435"/>
<line x1="539.9" y1="193.8" x2="539.9" y2="435"/>
<line x1="570.7" y1="193.8" x2="570.7" y2="435"/>
<line x1="601.6" y1="193.8" x2="601.6" y2="435"/>
<line x1="632.4" y1="193.8" x2="632.4" y2="435"/>
<line x1="663.3" y1="193.8" x2="663.3" y2="435"/>
<line x1="323.8" y1="224.7" x2="694.2" y2="224.7"/>
<line x1="323.8" y1="255.5" x2="694.2" y2="255.5"/>
<line x1="323.8" y1="286.4" x2="341" y2="286.4"/>
<line x1="680" y1="286.4" x2="694.2" y2="286.4"/>
<line x1="323.8" y1="317.3" x2="694.2" y2="317.3"/>
<line x1="323.8" y1="348.1" x2="694.2" y2="348.1"/>
<line x1="323.8" y1="379.0" x2="694.2" y2="379.0"/>
<line x1="323.8" y1="409.8" x2="694.2" y2="409.8"/>
</g>
<line x1="340" y1="286.4" x2="679" y2="286.4" stroke="#d6605e" stroke-width="1.3"/>
<line x1="509.0" y1="200" x2="509.0" y2="286.4" stroke="#5cb868" stroke-width="1.2"/>
<line x1="509.0" y1="409.84" x2="509.0" y2="435" stroke="#5cc868" stroke-width="1.2"/>
<path d="M596.29 199.11 A123.44 123.44 0 1 1 421.71 199.11" fill="none" stroke="#14f01e" stroke-width="2.2"/>
<path d="M421.71 199.11 L457.86 162.96" fill="none" stroke="#14f01e" stroke-width="1.6"/>
<path d="M560.14 162.96 L596.29 199.11" fill="none" stroke="#14f01e" stroke-width="1.4"/>
<path d="M421.71 199.11 A123.44 123.44 0 0 1 596.29 199.11" fill="none" stroke="#0a0ae6" stroke-width="2"/>
<line x1="421.71" y1="199.51" x2="596.29" y2="199.51" stroke="#0a0ae6" stroke-width="2.2"/>
<path d="M457.86 162.96 L560.14 162.96" fill="none" stroke="#14f01e" stroke-width="2.1"/>
<path d="M509.0 193 L511.6 204 L506.4 204 Z" fill="#1f7a30"/>
<line x1="509.0" y1="286.4" x2="509.0" y2="409.8" stroke="#62c46c" stroke-width="1.4"/>
<path d="M509.0 286.4 V323 M509.0 346.5 V409.8" stroke="#e22c1c" stroke-width="2" fill="none"/>
<path d="M509.0 410.8 l-2.2 -5 h4.4 z" fill="#ff2a10"/>
<circle cx="421.71" cy="199.11" r="2.4" fill="#14f01e"/>
<circle cx="596.29" cy="199.11" r="2.4" fill="#14f01e"/>
<circle cx="457.86" cy="162.96" r="2.4" fill="#14f01e"/>
<circle cx="560.14" cy="162.96" r="2.4" fill="#14f01e"/>
<circle cx="509.0" cy="287.0" r="1.8" fill="#0a0a0a"/>
<path d="M464.0 198.7 A42.3 42.3 0 0 0 462.8 188.9 M458.3 178.0 A42.3 42.3 0 0 0 451.6 169.2" fill="none" stroke="#f03020" stroke-width="1.5" stroke-linecap="round"/>
<path d="M462.2 199.1 h3.6 l-1.8 -3 z" fill="#f03020"/>
<text x="451.4" y="186" font-family="Liberation Sans,sans-serif" font-size="7.9" textLength="18.7" lengthAdjust="spacingAndGlyphs" fill="#a82834" stroke="#a82834" stroke-width="0.25">45.00</text>
<text transform="translate(511.7 344.6) rotate(-90)" font-family="Liberation Sans,sans-serif" font-size="7.4" fill="#b22a24" stroke="#b22a24" stroke-width="0.2">40.00</text>
<rect x="504" y="189.2" width="10" height="2.8" fill="#ff2a0e"/>
<g transform="translate(416 194)" fill="none" stroke="#ff2a10" stroke-width="2" stroke-linecap="round"><path d="M-1.7 -3.4 L4.1 2.6"/><path d="M-4.1 -0.4 Q0 -1 1 1 Q2 3 1.7 4.2"/></g>
<g transform="translate(601 194)" fill="none" stroke="#ff2a10" stroke-width="2" stroke-linecap="round"><path d="M-1.7 -3.4 L4.1 2.6"/><path d="M-4.1 -0.4 Q0 -1 1 1 Q2 3 1.7 4.2"/></g>
<path d="M503.8 154.6 L507.2 151.5 L509 153 L513.5 153.3 L513.8 158 L512.2 156.6 L511.6 159 L510.3 160.8 L508.8 158 L507 155.8 Z" fill="#ff2a10" stroke="#ff2a10" stroke-width="0.6" stroke-linejoin="round"/>
<g fill="#8c2028" stroke="#8c2028"><path d="M591.9 284.2 h1.7 v0.6 h4.2 l4.4 1 v1.1 l-4.4 1 h-4.2 v0.6 h-1.7 z" stroke-width="0.3"/><line x1="602" y1="286.35" x2="606" y2="286.35" stroke-width="0.8"/></g>
<g font-family="Liberation Sans,sans-serif" font-size="6.4" fill="#20202c"><line x1="754" y1="417.1" x2="754" y2="405" stroke="#18a018" stroke-width="1.5"/><line x1="754" y1="417.1" x2="766.5" y2="417.1" stroke="#a82020" stroke-width="1.3"/><circle cx="763" cy="417.1" r="1.1" fill="#a82020"/><circle cx="754" cy="417.2" r="1.3" fill="#2020a0"/><text x="755.6" y="404.6">Y</text><text x="755.6" y="416.3">Z</text><text x="767.2" y="416.8">X</text></g>
</svg>
</body></html>
